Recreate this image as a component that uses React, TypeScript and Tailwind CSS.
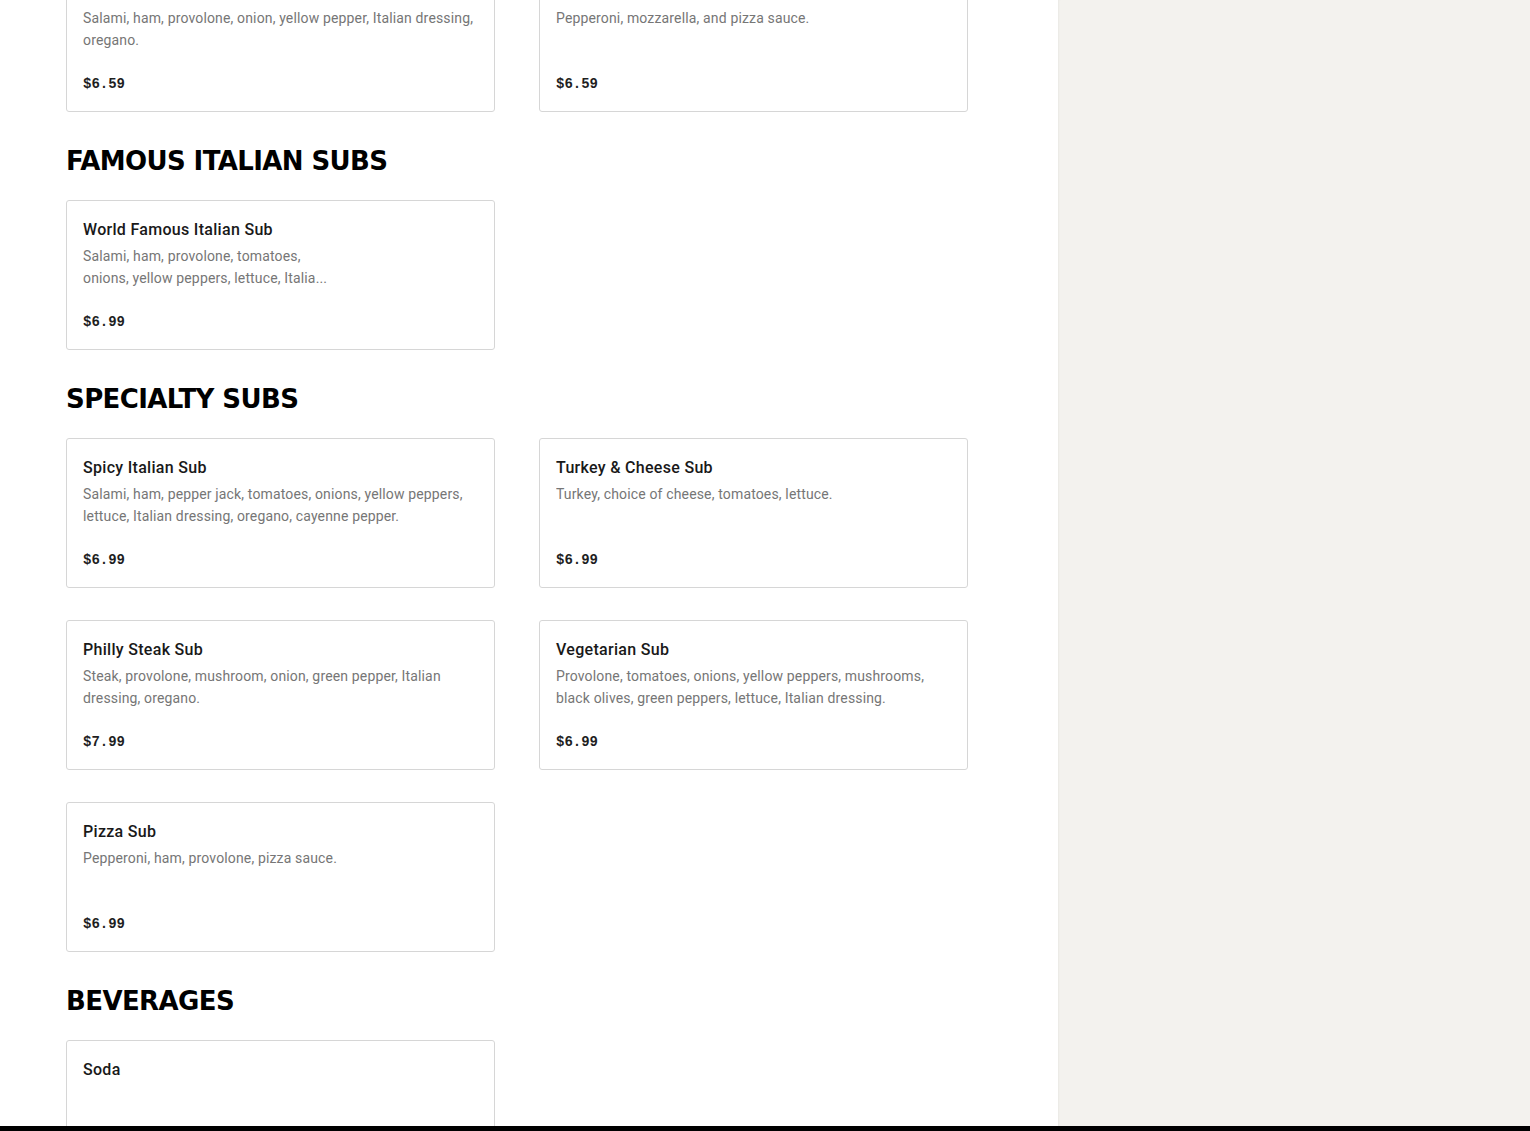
type Item = {
  name: string;
  desc?: string;
  price?: string;
  narrow?: boolean;
};

type Section = {
  title?: string;
  items: Item[];
};

const sections: Section[] = [
  {
    items: [
      {
        name: 'Mini Italian Sub',
        desc: 'Salami, ham, provolone, onion, yellow pepper, Italian dressing, oregano.',
        price: '$6.59',
      },
      { name: 'Mini Pizza Sub', desc: 'Pepperoni, mozzarella, and pizza sauce.', price: '$6.59' },
    ],
  },
  {
    title: 'FAMOUS ITALIAN SUBS',
    items: [
      {
        name: 'World Famous Italian Sub',
        desc: 'Salami, ham, provolone, tomatoes, onions, yellow peppers, lettuce, Italia...',
        price: '$6.99',
        narrow: true,
      },
    ],
  },
  {
    title: 'SPECIALTY SUBS',
    items: [
      {
        name: 'Spicy Italian Sub',
        desc: 'Salami, ham, pepper jack, tomatoes, onions, yellow peppers, lettuce, Italian dressing, oregano, cayenne pepper.',
        price: '$6.99',
      },
      { name: 'Turkey & Cheese Sub', desc: 'Turkey, choice of cheese, tomatoes, lettuce.', price: '$6.99' },
      {
        name: 'Philly Steak Sub',
        desc: 'Steak, provolone, mushroom, onion, green pepper, Italian dressing, oregano.',
        price: '$7.99',
      },
      {
        name: 'Vegetarian Sub',
        desc: 'Provolone, tomatoes, onions, yellow peppers, mushrooms, black olives, green peppers, lettuce, Italian dressing.',
        price: '$6.99',
      },
      { name: 'Pizza Sub', desc: 'Pepperoni, ham, provolone, pizza sauce.', price: '$6.99' },
    ],
  },
  {
    title: 'BEVERAGES',
    items: [{ name: 'Soda', price: '$1.99' }],
  },
];

export default function App() {
  return (
    <div className="h-screen flex flex-col overflow-hidden bg-white">
      <div className="flex-1 flex min-h-0">
        {/* menu column */}
        <main className="w-[1058px] shrink-0 overflow-hidden pl-[66px]">
          <div className="-mt-[38px]">
            {sections.map((s, i) => (
              <section key={i}>
                {s.title && (
                  <h2 className="pt-[31px] pb-[21px] text-[26px] leading-[36px] font-bold tracking-[-0.6px] text-black font-['DejaVu_Sans',sans-serif]">
                    {s.title}
                  </h2>
                )}
                <div className="grid grid-cols-[429px_429px] gap-x-[44px] gap-y-[32px]">
                  {s.items.map(item => (
                    <MenuCard key={item.name} item={item} />
                  ))}
                </div>
              </section>
            ))}
          </div>
        </main>

        {/* cart sidebar */}
        <aside className="flex-1 bg-[#f3f2ee] shadow-[inset_2px_0_3px_-2px_rgba(0,0,0,0.08)]" />
      </div>
      <div className="h-[5px] bg-black shrink-0" />
    </div>
  );
}

function MenuCard({ item }: { item: Item }) {
  return (
    <div className="h-[150px] border border-[#d6d6d6] rounded-[3px] bg-white px-4 pt-[17px] pb-4 flex flex-col font-['Roboto',sans-serif]">
      <h3 className="text-[16px] leading-[24px] font-medium tracking-[0.3px] text-[#191919]">{item.name}</h3>
      <p
        className={
          'mt-[3px] h-[44px] text-[14px] leading-[22px] tracking-[0.15px] text-[#767676] line-clamp-2 ' +
          (item.narrow ? 'max-w-[250px]' : '')
        }
      >
        {item.desc}
      </p>
      <p className="mt-auto text-[14px] leading-[22px] font-bold text-[#1f1f1f] font-['Liberation_Mono',monospace]">
        {item.price}
      </p>
    </div>
  );
}
